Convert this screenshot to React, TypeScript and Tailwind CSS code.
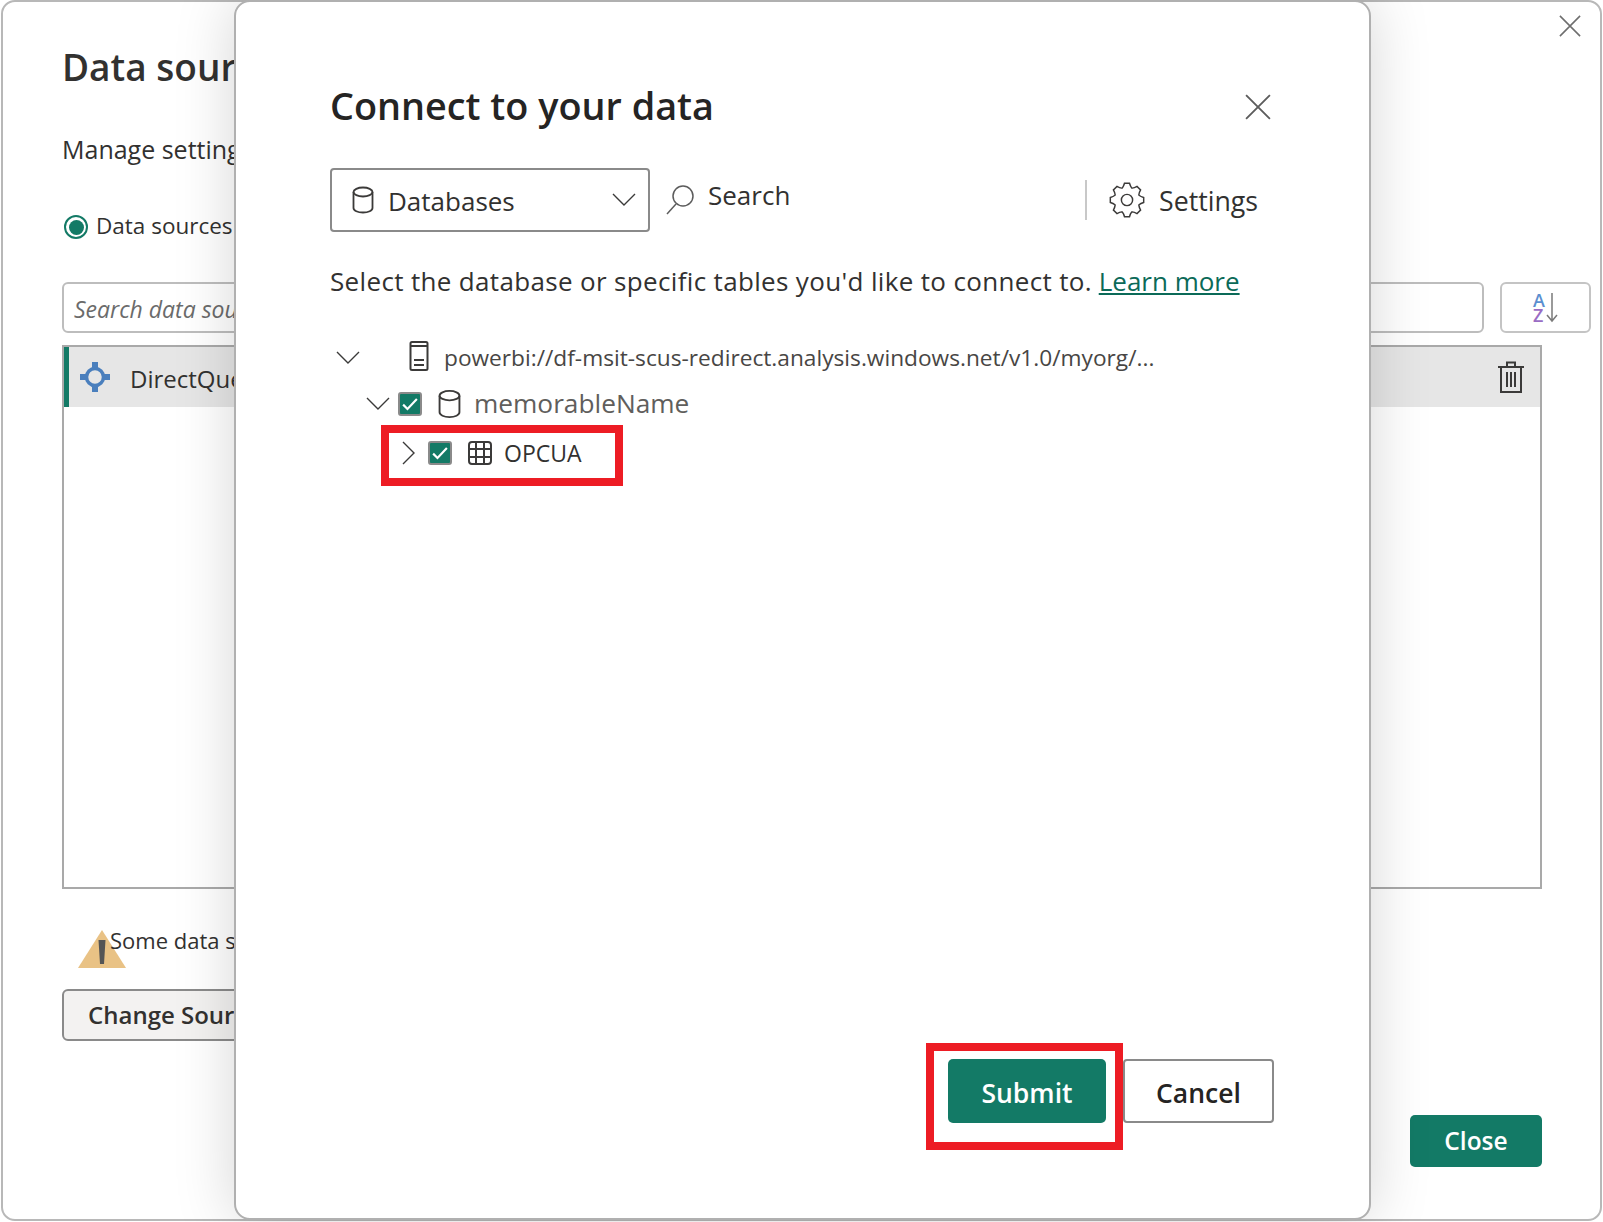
import React from "react";

const F = { fontFamily: '"Open Sans", "Noto Sans", sans-serif' };

function gearPath() {
  const pts: string[] = [];
  const n = 8;
  for (let i = 0; i < n; i++) {
    const a = (i * 2 * Math.PI) / n - Math.PI / 2;
    const w = Math.PI / n;
    const p = (r: number, t: number) =>
      `${(16 + r * Math.cos(t)).toFixed(2)} ${(16 + r * Math.sin(t)).toFixed(2)}`;
    pts.push(`${i === 0 ? "M" : "L"}${p(11.5, a - w * 0.95)}`);
    pts.push(`Q${p(12.5, a - w * 0.62)} ${p(15, a - w * 0.38)}`);
    pts.push(`L${p(15, a + w * 0.38)}`);
    pts.push(`Q${p(12.5, a + w * 0.62)} ${p(11.5, a + w * 0.95)}`);
  }
  return pts.join(" ") + "Z";
}

function Cyl({ cls }: { cls: string }) {
  return (
    <svg viewBox="0 0 22 28" className={cls} fill="none" stroke="#3b3a39" strokeWidth="1.8">
      <ellipse cx="11" cy="6" rx="9.5" ry="4.5" />
      <path d="M1.5 6v16c0 2.6 4.2 4.5 9.5 4.5s9.5-1.900 9.5-4.500V6" />
    </svg>
  );
}

function Chev({ dir, cls }: { dir: "down" | "right"; cls: string }) {
  return (
    <svg viewBox="0 0 24 24" className={cls} fill="none" stroke="#3b3a39" strokeWidth="1.400">
      {dir === "down" ? <path d="M1 6l11 11L23 6" /> : <path d="M7 1l11 11L7 23" />}
    </svg>
  );
}

function Check() {
  return (
    <span className="flex h-[24px] w-[24px] shrink-0 items-center justify-center rounded-[3px] border-2 border-[#8a8a8a] bg-[#137a66]">
      <svg viewBox="0 0 16 16" className="h-[20px] w-[20px]" fill="none" stroke="#fff" strokeWidth="1.700">
        <path d="M2.500 8.500l3.500 3.500 7.500-8" />
      </svg>
    </span>
  );
}

function Cross({ cls, color }: { cls: string; color: string }) {
  return (
    <svg viewBox="0 0 24 24" className={cls} fill="none" stroke={color} strokeWidth="1.700">
      <path d="M1 1l22 22M23 1L1 23" />
    </svg>
  );
}

export default function App() {
  return (
    <div style={F} className="relative h-[1222px] w-[1603px] overflow-hidden bg-white text-[#323130]">
      {/* back window */}
      <div className="ml-[1px] flex h-[1221px] w-[1601px] flex-col rounded-[14px] border-2 border-[#b8b8b8] pl-[59px] pr-[8px]">
        <h1 className="mt-[38px] h-[54px] text-[37px] font-semibold leading-[54px]">Data source settings</h1>
        <p className="mt-[37px] h-[36px] text-[25px] leading-[36px]">Manage settings for data sources</p>
        <div className="mt-[44px] flex h-[30px] items-center">
          <span className="ml-[2px] mt-[2px] flex h-[24px] w-[24px] items-center justify-center rounded-full border-2 border-[#137a66]">
            <span className="h-[15px] w-[15px] rounded-full bg-[#137a66]" />
          </span>
          <span className="ml-[8px] text-[22.500px] leading-[30px]">Data sources in current file</span>
        </div>
        <div className="mt-[41px] flex h-[51px] gap-[16px]">
          <div className="flex h-full w-[1422px] items-center rounded-[6px] border-2 border-[#bdbdbd] pl-[10px] pt-[4px] text-[23px] italic text-[#6b6b6b]">
            Search data source settings
          </div>
          <div className="flex h-full w-[91px] items-center justify-center rounded-[6px] border-2 border-[#c4c4c4]">
            <span className="flex flex-col text-[18px] font-semibold leading-[15px]">
              <span className="text-[#5b8fd0]">A</span>
              <span className="text-[#9a6cc4]">Z</span>
            </span>
            <svg viewBox="0 0 12 30" className="ml-[1px] h-[30px] w-[12px]" fill="none" stroke="#7a7a7a" strokeWidth="1.500">
              <path d="M6 0v28M1 22l5 6 5-6" />
            </svg>
          </div>
        </div>
        <div className="mt-[12px] h-[544px] w-[1480px] border-2 border-[#a9a9a9]">
          <div className="flex h-[60px] items-center border-l-[5px] border-[#137a66] bg-[#e6e6e6]">
            <svg viewBox="0 0 32 32" className="ml-[10px] h-[32px] w-[32px]">
              <circle cx="16" cy="16" r="8.500" fill="none" stroke="#4a7fbd" strokeWidth="3.500" />
              <path d="M13 1h6v6h-6zM13 25h6v6h-6zM1 13h6v6H1zM25 13h6v6h-6z" fill="#4a7fbd" />
            </svg>
            <span className="ml-[19px] mt-[3px] text-[24px]">DirectQuery to AS - memorableName</span>
            <svg viewBox="0 0 26 32" className="ml-auto mr-[16px] h-[32px] w-[26px]" fill="none" stroke="#3b3a39" strokeWidth="2">
              <path d="M0 6h26M9 6V1.500h8V6M3 6v25h20V6M9 11v15M13 11v15M17 11v15" />
            </svg>
          </div>
        </div>
        <div className="mt-[38px] flex h-[44px] items-start">
          <svg viewBox="0 0 48 38" className="ml-[16px] mt-[3px] h-[38px] w-[48px] shrink-0">
            <path d="M24 0L48 38H0z" fill="#e9c285" />
            <path d="M20.500 10h7l-1.500 24h-4z" fill="#555" />
          </svg>
          <span className="-ml-[16px] text-[22px] leading-[26px]">Some data sources may need your attention</span>
        </div>
        <div className="mt-[18px] flex h-[52px] w-[360px] items-center rounded-[6px] border-2 border-[#8a8a8a] bg-[#f3f2f1] pl-[24px] text-[24px] font-semibold">
          Change Source...
        </div>
        <div className="mt-[74px] flex h-[52px] w-[1480px] justify-end">
          <div className="flex h-full w-[132px] items-center justify-center rounded-[5px] bg-[#137a66] text-[24.500px] font-semibold text-white">
            Close
          </div>
        </div>
      </div>
      <Cross cls="absolute left-[1559px] top-[15px] h-[22px] w-[22px]" color="#6e6e6e" />

      {/* modal */}
      <div className="absolute left-[234px] top-0 flex h-[1220px] w-[1137px] flex-col rounded-[16px] border-2 border-[#b0b0b0] bg-white pl-[94px] pr-[95px] shadow-[0_0_60px_rgba(0,0,0,0.17)]">
        <div className="mt-[77px] flex h-[54px] items-center justify-between">
          <h2 className="text-[37.800px] font-semibold leading-[54px] text-[#252423]">Connect to your data</h2>
          <Cross cls="mr-[3px] mt-[2px] h-[26px] w-[26px]" color="#5c5c5c" />
        </div>
        <div className="mt-[35px] flex h-[64px] items-center">
          <div className="flex h-full w-[320px] items-center rounded-[4px] border-2 border-[#8a8a8a] pl-[20px] pr-[12px]">
            <Cyl cls="h-[28px] w-[22px]" />
            <span className="ml-[14px] pt-[2px] text-[26px]">Databases</span>
            <Chev dir="down" cls="ml-auto h-[24px] w-[24px]" />
          </div>
          <svg viewBox="0 0 28 30" className="ml-[16px] h-[30px] w-[28px]" fill="none" stroke="#5c5c5c" strokeWidth="1.500">
            <circle cx="17" cy="11" r="10" />
            <path d="M10 19L1 29" />
          </svg>
          <span className="mb-[10px] ml-[14px] text-[26px]">Search</span>
          <span className="ml-auto h-[40px] w-[2px] bg-[#c8c8c8]" />
          <svg viewBox="0 0 32 32" className="ml-[22px] h-[36px] w-[36px]" fill="none" stroke="#3b3a39" strokeWidth="1.300">
            <path d={gearPath()} />
            <circle cx="16" cy="16" r="5" />
          </svg>
          <span className="ml-[14px] mr-[16px] pt-[2px] text-[26.700px]">Settings</span>
        </div>
        <p className="mt-[30px] h-[38px] whitespace-nowrap text-[26px] leading-[38px]">
          <span className="tracking-[0.34px]">Select the database or specific tables you'd like to connect to.</span>{" "}
          <span className="text-[#0b6a58] underline">Learn more</span>
        </p>
        <div className="mt-[38px] flex h-[40px] items-center">
          <Chev dir="down" cls="ml-[6px] h-[24px] w-[24px]" />
          <svg viewBox="0 0 20 30" className="mb-[4px] ml-[49px] h-[30px] w-[20px]" fill="none" stroke="#3b3a39" strokeWidth="2">
            <rect x="1.500" y="1" width="17" height="28" rx="1.500" />
            <path d="M1.500 5h17M5 19h10M5 24h10" />
          </svg>
          <span className="ml-[15px] text-[22.700px] text-[#484644]">powerbi://df-msit-scus-redirect.analysis.windows.net/v1.0/myorg/...</span>
        </div>
        <div className="mt-[6px] flex h-[40px] items-center">
          <Chev dir="down" cls="ml-[36px] h-[24px] w-[24px]" />
          <span className="ml-[8px]"><Check /></span>
          <Cyl cls="ml-[16px] h-[30px] w-[23px]" />
          <span className="ml-[13px] text-[26.250px] text-[#605e5c]">memorableName</span>
        </div>
        <div className="mt-[9px] flex h-[40px] items-center">
          <Chev dir="right" cls="ml-[66px] h-[24px] w-[24px]" />
          <span className="ml-[8px]"><Check /></span>
          <svg viewBox="0 0 24 24" className="ml-[16px] h-[24px] w-[24px]" fill="none" stroke="#3b3a39" strokeWidth="2">
            <rect x="1" y="1" width="22" height="22" rx="3" />
            <path d="M8 1v22M16 1v22M1 8h22M1 16h22" />
          </svg>
          <span className="ml-[12px] text-[23px]">OPCUA</span>
        </div>
        <div className="mb-[95px] mt-auto flex h-[64px] justify-end">
          <div className="flex h-full w-[158px] items-center justify-center rounded-[5px] bg-[#137a66] pt-[6px] text-[26.500px] font-semibold text-white">
            Submit
          </div>
          <div className="ml-[17px] flex h-full w-[151px] items-center justify-center rounded-[4px] border-2 border-[#8a8a8a] pt-[6px] text-[26.500px] font-semibold text-[#252423]">
            Cancel
          </div>
        </div>
      </div>

      {/* red annotation boxes */}
      <div className="absolute left-[381px] top-[425px] h-[61px] w-[242px] border-[8px] border-[#ed1c24]" />
      <div className="absolute left-[926px] top-[1043px] h-[107px] w-[197px] border-[8px] border-[#ed1c24]" />
    </div>
  );
}
